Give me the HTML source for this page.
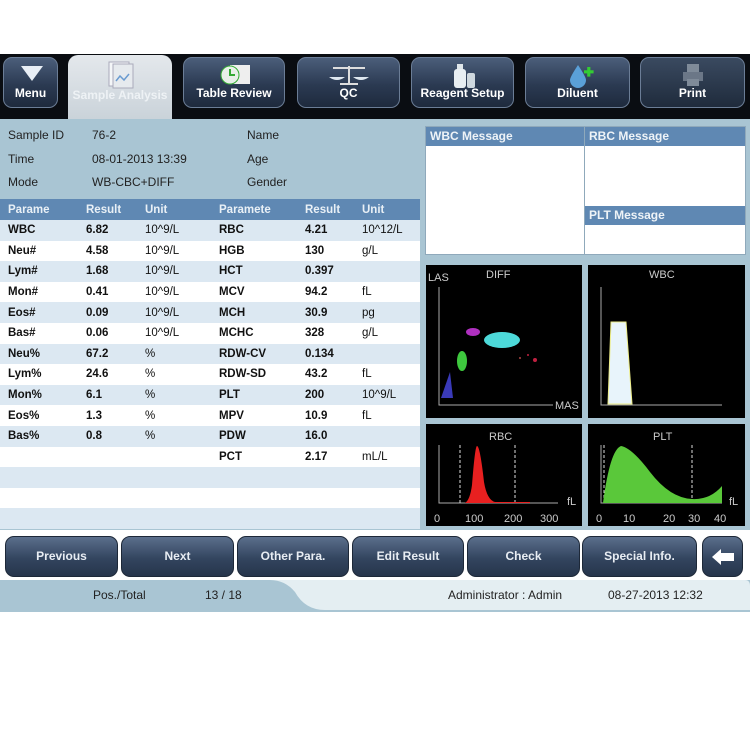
<!DOCTYPE html>
<html><head><meta charset="utf-8"><style>
*{margin:0;padding:0;box-sizing:border-box}
body{width:750px;height:750px;background:#fff;font-family:"Liberation Sans",sans-serif;position:relative;overflow:hidden}
.a{position:absolute}
.top{left:0;top:54px;width:750px;height:66px;background:#0a0d12}
.btn{position:absolute;top:57px;height:51px;border-radius:9px;background:linear-gradient(#4b5e7a,#2b3a52 55%,#1e2a3d);border:1px solid #6b7d96;color:#fff;font-weight:bold;font-size:12px;text-align:center}
.btn span{position:absolute;left:0;right:0;bottom:7px}
.tab{left:68px;top:55px;width:104px;height:66px;background:linear-gradient(#e4e8ec,#c9d2d9);border-radius:10px 10px 0 0;color:#eef2f5;font-weight:bold;font-size:12px;text-align:center}
.content{left:0;top:119px;width:750px;height:411px;background:#a9c5d3}
.info{font-size:12px;color:#222}
.tbl{left:0;top:199px;width:420px}
.row{height:20.6px;display:flex;font-size:11.5px;align-items:center;color:#111}
.row:nth-child(odd){background:#fff}.row:nth-child(even){background:#dce8f2}
.row.h{background:#5f88b3;color:#e9f0f6;font-weight:bold;height:21px}
.c1{width:86px;padding-left:8px;font-weight:bold}.c2{width:59px;font-weight:bold}.c3{width:74px}.c4{width:86px;font-weight:bold}.c5{width:57px;font-weight:bold}.c6{width:58px}
.row.h div{font-weight:bold}
.msg{background:#fff;border:1px solid #8fa9bb}
.mh{background:#5f88b3;color:#eef3f7;font-weight:bold;font-size:12px;padding:2px 4px;height:19px}
.bb{position:absolute;top:536px;height:41px;border-radius:9px;background:linear-gradient(#5b6f8c,#33455f 55%,#26354b);border:1px solid #1d2838;color:#e8edf3;font-weight:bold;font-size:12px;text-align:center;line-height:39px}
.st{font-size:12px;color:#222}
</style></head><body>
<div class="a top"></div>
<div class="btn" style="left:3px;width:55px"><svg class="a" style="left:17px;top:8px" width="22" height="16"><polygon points="0,0 22,0 11,15" fill="#e8eef5"/></svg><span>Menu</span></div>
<div class="a tab"><svg class="a" style="left:40px;top:6px" width="26" height="28"><rect x="1" y="1" width="20" height="24" fill="#f4f6f8" stroke="#aab"/><rect x="5" y="3" width="20" height="24" fill="#e6eaee" stroke="#aab"/><polyline points="8,20 12,15 16,19 21,13" fill="none" stroke="#6a9bd0" stroke-width="1.5"/></svg><span class="a" style="left:0;right:0;top:33px">Sample Analysis</span></div>
<div class="btn" style="left:183px;width:102px"><svg class="a" style="left:34px;top:6px" width="34" height="22"><rect x="12" y="1" width="20" height="19" fill="#eee"/><circle cx="12" cy="11" r="9" fill="#e8f0e8" stroke="#3a3"/><path d="M12 5v6h5" stroke="#3a3" stroke-width="2" fill="none"/></svg><span>Table Review</span></div>
<div class="btn" style="left:297px;width:103px"><svg class="a" style="left:30px;top:6px" width="42" height="22"><line x1="21" y1="2" x2="21" y2="19" stroke="#ddd" stroke-width="2"/><line x1="5" y1="4" x2="37" y2="4" stroke="#ddd" stroke-width="2"/><path d="M1 13 Q9 19 17 13Z M25 13 Q33 19 41 13Z" fill="#dfe8f0"/><line x1="12" y1="20" x2="30" y2="20" stroke="#ddd" stroke-width="2"/></svg><span>QC</span></div>
<div class="btn" style="left:411px;width:103px"><svg class="a" style="left:40px;top:5px" width="24" height="26"><rect x="2" y="6" width="12" height="19" rx="3" fill="#e8eef2"/><rect x="15" y="10" width="8" height="15" rx="2" fill="#cfd8de"/><rect x="5" y="1" width="6" height="5" fill="#dfe6ea"/></svg><span>Reagent Setup</span></div>
<div class="btn" style="left:525px;width:105px"><svg class="a" style="left:42px;top:5px" width="28" height="26"><path d="M10 2 Q2 14 2 17 A8 8 0 0 0 18 17 Q18 14 10 2Z" fill="#5aa0d8"/><path d="M19 5h4v4h4v4h-4v4h-4v-4h-4v-4h4z" fill="#3c3" transform="scale(.8) translate(5,0)"/></svg><span>Diluent</span></div>
<div class="btn" style="left:640px;width:105px;background:linear-gradient(#3a4a60,#1f2b3c)"><svg class="a" style="left:41px;top:5px" width="22" height="24"><rect x="5" y="1" width="12" height="8" fill="#7f8b99"/><rect x="1" y="9" width="20" height="9" fill="#6b7787"/><rect x="5" y="16" width="12" height="7" fill="#7f8b99"/></svg><span>Print</span></div>

<div class="a content"></div>
<div class="a info" style="left:8px;top:128px">Sample ID</div><div class="a info" style="left:92px;top:128px">76-2</div><div class="a info" style="left:247px;top:128px">Name</div>
<div class="a info" style="left:8px;top:152px">Time</div><div class="a info" style="left:92px;top:152px">08-01-2013 13:39</div><div class="a info" style="left:247px;top:152px">Age</div>
<div class="a info" style="left:8px;top:175px">Mode</div><div class="a info" style="left:92px;top:175px">WB-CBC+DIFF</div><div class="a info" style="left:247px;top:175px">Gender</div>

<div class="a tbl">
<div class="row h"><div class="c1">Parame</div><div class="c2">Result</div><div class="c3">Unit</div><div class="c4">Paramete</div><div class="c5">Result</div><div class="c6">Unit</div></div>
<div class="row"><div class="c1">WBC</div><div class="c2">6.82</div><div class="c3">10^9/L</div><div class="c4">RBC</div><div class="c5">4.21</div><div class="c6">10^12/L</div></div>
<div class="row"><div class="c1">Neu#</div><div class="c2">4.58</div><div class="c3">10^9/L</div><div class="c4">HGB</div><div class="c5">130</div><div class="c6">g/L</div></div>
<div class="row"><div class="c1">Lym#</div><div class="c2">1.68</div><div class="c3">10^9/L</div><div class="c4">HCT</div><div class="c5">0.397</div><div class="c6"></div></div>
<div class="row"><div class="c1">Mon#</div><div class="c2">0.41</div><div class="c3">10^9/L</div><div class="c4">MCV</div><div class="c5">94.2</div><div class="c6">fL</div></div>
<div class="row"><div class="c1">Eos#</div><div class="c2">0.09</div><div class="c3">10^9/L</div><div class="c4">MCH</div><div class="c5">30.9</div><div class="c6">pg</div></div>
<div class="row"><div class="c1">Bas#</div><div class="c2">0.06</div><div class="c3">10^9/L</div><div class="c4">MCHC</div><div class="c5">328</div><div class="c6">g/L</div></div>
<div class="row"><div class="c1">Neu%</div><div class="c2">67.2</div><div class="c3">%</div><div class="c4">RDW-CV</div><div class="c5">0.134</div><div class="c6"></div></div>
<div class="row"><div class="c1">Lym%</div><div class="c2">24.6</div><div class="c3">%</div><div class="c4">RDW-SD</div><div class="c5">43.2</div><div class="c6">fL</div></div>
<div class="row"><div class="c1">Mon%</div><div class="c2">6.1</div><div class="c3">%</div><div class="c4">PLT</div><div class="c5">200</div><div class="c6">10^9/L</div></div>
<div class="row"><div class="c1">Eos%</div><div class="c2">1.3</div><div class="c3">%</div><div class="c4">MPV</div><div class="c5">10.9</div><div class="c6">fL</div></div>
<div class="row"><div class="c1">Bas%</div><div class="c2">0.8</div><div class="c3">%</div><div class="c4">PDW</div><div class="c5">16.0</div><div class="c6"></div></div>
<div class="row"><div class="c1"></div><div class="c2"></div><div class="c3"></div><div class="c4">PCT</div><div class="c5">2.17</div><div class="c6">mL/L</div></div>
<div class="row"></div><div class="row"></div><div class="row"></div>
</div>

<div class="a msg" style="left:425px;top:126px;width:321px;height:129px"></div>
<div class="a" style="left:584px;top:126px;width:1px;height:129px;background:#8fa9bb"></div>
<div class="a mh" style="left:426px;top:127px;width:158px">WBC Message</div>
<div class="a mh" style="left:585px;top:127px;width:160px">RBC Message</div>
<div class="a mh" style="left:585px;top:206px;width:160px">PLT Message</div>

<svg class="a" style="left:420px;top:260px" width="330" height="270">
<g font-family="Liberation Sans" font-size="11" fill="#ccc">
<rect x="6" y="5" width="156" height="153" fill="#000"/>
<rect x="168" y="5" width="157" height="153" fill="#000"/>
<rect x="6" y="164" width="156" height="102" fill="#000"/>
<rect x="168" y="164" width="157" height="102" fill="#000"/>
<text x="8" y="21">LAS</text><text x="66" y="18">DIFF</text><text x="135" y="149">MAS</text>
<polyline points="19,27 19,145 133,145" fill="none" stroke="#aaa"/>
<ellipse cx="82" cy="80" rx="18" ry="8" fill="#4dd9d9"/>
<ellipse cx="53" cy="72" rx="7" ry="4" fill="#b030c0"/>
<ellipse cx="42" cy="101" rx="5" ry="10" fill="#3ec83e"/>
<polygon points="21,138 30,112 33,138" fill="#3a3ab8"/>
<circle cx="115" cy="100" r="2" fill="#c02040"/><circle cx="108" cy="95" r="1" fill="#c02040"/><circle cx="100" cy="98" r="1" fill="#a44"/>
<text x="229" y="18">WBC</text>
<polyline points="181,27 181,145 302,145" fill="none" stroke="#aaa"/>
<polygon points="188,144 191,62 206,62 212,144" fill="#e8f4fb" stroke="#ee8"/>
<text x="69" y="180">RBC</text>
<polyline points="19,185 19,243 138,243" fill="none" stroke="#aaa"/>
<line x1="40" y1="185" x2="40" y2="243" stroke="#ddd" stroke-dasharray="3,2"/>
<line x1="95" y1="185" x2="95" y2="243" stroke="#ddd" stroke-dasharray="3,2"/>
<path d="M45 243 Q50 240 52 225 Q55 186 57 186 Q60 186 64 222 Q67 240 75 242 L110 242 L110 243Z" fill="#e82020"/>
<text x="14" y="262">0</text><text x="45" y="262">100</text><text x="84" y="262">200</text><text x="120" y="262">300</text><text x="147" y="245">fL</text>
<text x="233" y="180">PLT</text>
<polyline points="181,185 181,243 302,243" fill="none" stroke="#aaa"/>
<line x1="184" y1="185" x2="184" y2="243" stroke="#ddd" stroke-dasharray="3,2"/>
<line x1="272" y1="185" x2="272" y2="243" stroke="#ddd" stroke-dasharray="3,2"/>
<path d="M183 243 Q190 190 201 186 Q212 188 230 212 Q250 238 272 239 Q290 240 302 226 L302 243Z" fill="#5ac83a"/>
<text x="176" y="262">0</text><text x="203" y="262">10</text><text x="243" y="262">20</text><text x="268" y="262">30</text><text x="294" y="262">40</text><text x="309" y="245">fL</text>
</g></svg>

<div class="bb" style="left:5px;width:113px">Previous</div>
<div class="bb" style="left:121px;width:113px">Next</div>
<div class="bb" style="left:237px;width:112px">Other Para.</div>
<div class="bb" style="left:352px;width:112px">Edit Result</div>
<div class="bb" style="left:467px;width:113px">Check</div>
<div class="bb" style="left:582px;width:115px">Special Info.</div>
<div class="bb" style="left:702px;width:41px"><svg style="margin-top:12px" width="22" height="16"><polygon points="0,8 9,0 9,4 22,4 22,12 9,12 9,16" fill="#fff"/></svg></div>

<svg class="a" style="left:0;top:580px" width="750" height="32"><rect width="750" height="32" fill="#a9c5d3"/><path d="M270 0 H745 Q750 0 750 6 V30 H325 Q305 30 295 12 Q285 0 270 0Z" fill="#e4eef2"/></svg>
<div class="a st" style="left:93px;top:588px">Pos./Total</div>
<div class="a st" style="left:205px;top:588px">13 / 18</div>
<div class="a st" style="left:448px;top:588px">Administrator : Admin</div>
<div class="a st" style="left:608px;top:588px">08-27-2013 12:32</div>
</body></html>
